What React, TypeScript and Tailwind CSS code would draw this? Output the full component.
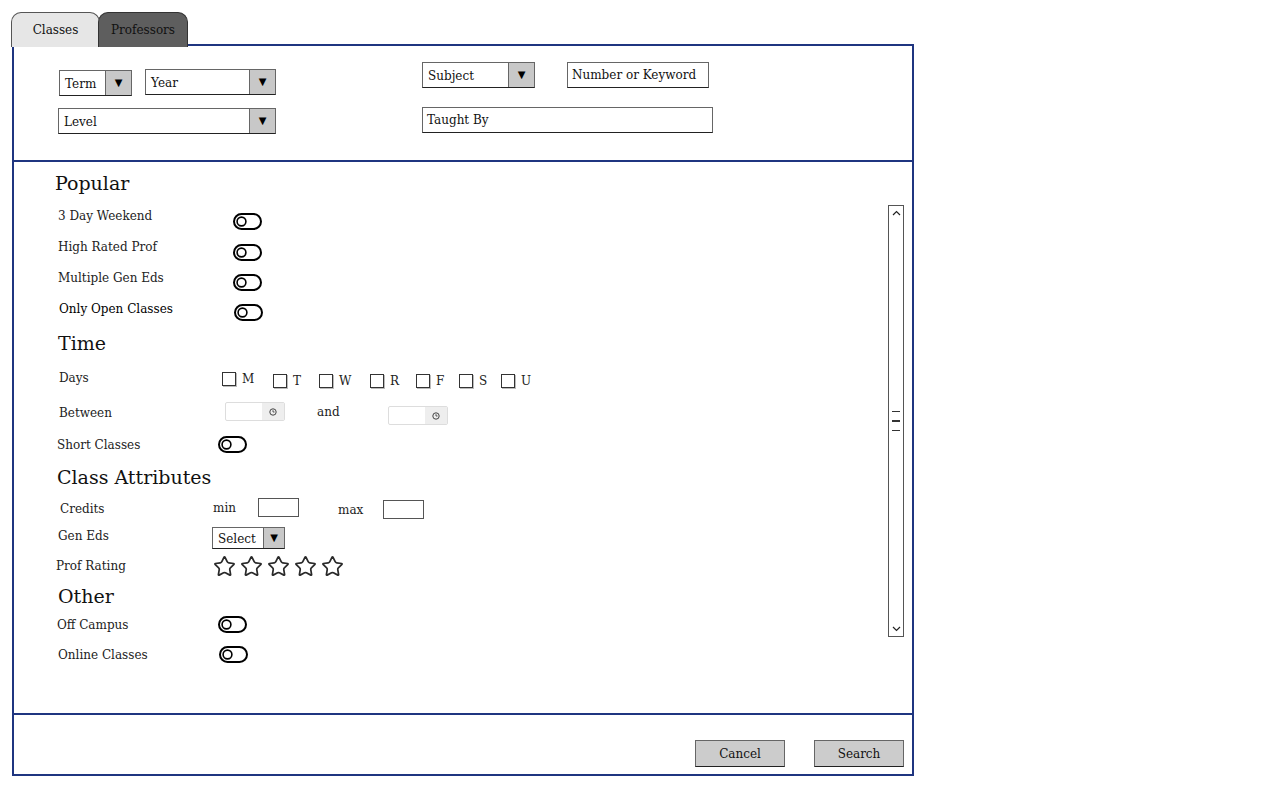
import { Star } from 'lucide-react';

const serif = "font-['DejaVu_Serif',serif]";

function Toggle() {
  return (
    <svg width="29" height="17" viewBox="0 0 29 17" className="block">
      <rect x="1" y="1" width="27" height="15" rx="7.5" fill="white" stroke="#000" strokeWidth="2" />
      <circle cx="8.5" cy="8.5" r="4.4" fill="white" stroke="#000" strokeWidth="1.6" />
    </svg>
  );
}

function Select({ label, w, h = 26, arrow = 26 }: { label: string; w: number; h?: number; arrow?: number }) {
  return (
    <div
      className="flex border border-[#666] border-b-[#222] bg-white text-[12px] leading-none text-[#111]"
      style={{ width: w, height: h }}
    >
      <div className="flex flex-1 items-center pl-[5px] pt-[1px]">{label}</div>
      <div
        className="flex items-center justify-center border-l border-[#666] bg-[#c8c8c8] text-[10px] text-black"
        style={{ width: arrow }}
      >
        ▼
      </div>
    </div>
  );
}

function TextBox({ label, w }: { label: string; w: number }) {
  return (
    <div
      className="flex h-[26px] items-center border border-[#666] border-b-[#222] bg-white pl-[4px] text-[12px] text-[#111]"
      style={{ width: w }}
    >
      {label}
    </div>
  );
}

function TimeInput() {
  return (
    <div className="flex h-[19px] w-[60px] overflow-hidden rounded-[2px] border border-[#ddd] bg-white">
      <div className="flex-1" />
      <div className="flex w-[22px] items-center justify-center bg-[#eeeeee]">
        <svg width="8" height="8" viewBox="0 0 8 8">
          <circle cx="4" cy="4" r="3.2" fill="none" stroke="#444" strokeWidth="1" />
          <path d="M4 2.2V4h1.5" fill="none" stroke="#444" strokeWidth="0.9" />
        </svg>
      </div>
    </div>
  );
}

function Heading({ text, ml, h }: { text: string; ml: number; h: number }) {
  return (
    <div className="shrink-0 text-[19px] leading-[24px] text-[#111]" style={{ marginLeft: ml, height: h }}>
      {text}
    </div>
  );
}

function Row({
  label,
  x,
  cx,
  h,
  labelTop = 1,
  dark,
  children,
}: {
  label: string;
  x: number;
  cx: number;
  h: number;
  labelTop?: number;
  dark?: boolean;
  children: React.ReactNode;
}) {
  return (
    <div className="flex shrink-0 items-start" style={{ height: h }}>
      <div
        className={`shrink-0 text-[12px] leading-[16px] ${dark ? 'text-black' : 'text-[#222]'}`}
        style={{ marginLeft: x - 14, width: cx - x, marginTop: labelTop }}
      >
        {label}
      </div>
      {children}
    </div>
  );
}

const popular = [
  { label: '3 Day Weekend', x: 58, cx: 233, top: 6 },
  { label: 'High Rated Prof', x: 58, cx: 233, top: 6 },
  { label: 'Multiple Gen Eds', x: 58, cx: 233, top: 5 },
  { label: 'Only Open Classes', x: 59, cx: 234, top: 4, dark: true },
];

const days = [
  { d: 'M', w: 51, top: 3 },
  { d: 'T', w: 46, top: 5 },
  { d: 'W', w: 51, top: 5 },
  { d: 'R', w: 46, top: 5 },
  { d: 'F', w: 43, top: 5 },
  { d: 'S', w: 42, top: 5 },
  { d: 'U', w: 40, top: 5 },
];

export default function App() {
  return (
    <div className={`min-h-[800px] w-[1280px] bg-white pl-[11px] pt-[12px] ${serif}`}>
      {/* tabs */}
      <div className="relative z-10 flex h-[35px]">
        <div className="flex w-[89px] items-center justify-center rounded-t-[10px] border border-b-0 border-[#555] bg-[#e6e6e6] text-[12px] text-[#111]">
          Classes
        </div>
        <div className="-ml-[2px] flex w-[90px] items-center justify-center rounded-t-[10px] border border-b-0 border-[#333] bg-[#5e5e5e] text-[12px] text-[#111]">
          Professors
        </div>
      </div>

      {/* panel */}
      <div className="-mt-[3px] ml-[1px] flex h-[732px] w-[902px] flex-col border-2 border-[#1f3580]">
        {/* filters */}
        <div className="flex h-[116px] shrink-0 border-b-2 border-[#1f3580]">
          <div className="ml-[44px] flex flex-col pt-[23px]">
            <div className="flex h-[27px] items-start">
              <div className="ml-[1px] mt-[1px]">
                <Select label="Term" w={73} />
              </div>
              <div className="ml-[13px]">
                <Select label="Year" w={131} />
              </div>
            </div>
            <div className="mt-[12px]">
              <Select label="Level" w={218} />
            </div>
          </div>
          <div className="ml-[146px] flex flex-col pt-[16px]">
            <div className="flex items-start">
              <Select label="Subject" w={113} />
              <div className="ml-[32px]">
                <TextBox label="Number or Keyword" w={142} />
              </div>
            </div>
            <div className="mt-[19px]">
              <TextBox label="Taught By" w={291} />
            </div>
          </div>
        </div>

        {/* options */}
        <div className="flex h-[553px] shrink-0 border-b-2 border-[#1f3580]">
          <div className="flex flex-1 flex-col pt-[9px]">
            <Heading text="Popular" ml={41} h={36} />
            {popular.map((p) => (
              <Row key={p.label} label={p.label} x={p.x} cx={p.cx} h={31} dark={p.dark}>
                <div style={{ marginTop: p.top }}>
                  <Toggle />
                </div>
              </Row>
            ))}

            <Heading text="Time" ml={44} h={38} />
            <Row label="Days" x={59} cx={222} h={33}>
              {days.map((d) => (
                <div key={d.d} className="flex shrink-0 items-center gap-[6px]" style={{ width: d.w, marginTop: d.top }}>
                  <div className="h-[14px] w-[14px] border border-[#333] bg-white shadow-[1px_1px_0_#bbb]" />
                  <span className="text-[12px] leading-[14px] text-[#222]">{d.d}</span>
                </div>
              ))}
            </Row>
            <Row label="Between" x={59} cx={225} h={34} labelTop={3}>
              <TimeInput />
              <div className="ml-[32px] mt-[2px] w-[71px] text-[12px] leading-[16px] text-[#222]">and</div>
              <div className="mt-[4px]">
                <TimeInput />
              </div>
            </Row>
            <Row label="Short Classes" x={57} cx={218} h={29}>
              <Toggle />
            </Row>

            <Heading text="Class Attributes" ml={43} h={33} />
            <Row label="Credits" x={60} cx={213} h={29} labelTop={3}>
              <div className="mt-[2px] w-[45px] text-[12px] leading-[16px] text-[#222]">min</div>
              <div className="h-[19px] w-[41px] border border-[#555] bg-white" />
              <div className="ml-[39px] mt-[4px] w-[45px] text-[12px] leading-[16px] text-[#222]">max</div>
              <div className="mt-[2px] h-[19px] w-[41px] border border-[#555] bg-white" />
            </Row>
            <Row label="Gen Eds" x={58} cx={212} h={30}>
              <Select label="Select" w={73} h={22} arrow={21} />
            </Row>
            <Row label="Prof Rating" x={56} cx={213} h={27}>
              <div className="-mt-[2px] flex gap-[4px]">
                {[0, 1, 2, 3, 4].map((i) => (
                  <Star key={i} size={23} strokeWidth={1.8} color="#2a2a2a" />
                ))}
              </div>
            </Row>

            <Heading text="Other" ml={44} h={32} />
            <Row label="Off Campus" x={57} cx={218} h={30}>
              <Toggle />
            </Row>
            <Row label="Online Classes" x={58} cx={219} h={30}>
              <Toggle />
            </Row>
          </div>

          {/* scrollbar */}
          <div className="mr-[8px] mt-[43px] flex h-[432px] w-[16px] shrink-0 flex-col items-center justify-between border border-[#555] bg-white py-[4px]">
            <svg width="9" height="6" viewBox="0 0 9 6">
              <path d="M1 5l3.5-3.5L8 5" fill="none" stroke="#222" strokeWidth="1.2" />
            </svg>
            <div className="flex flex-col gap-[8px]">
              <div className="h-[1.5px] w-[8px] bg-[#333]" />
              <div className="h-[1.5px] w-[8px] bg-[#333]" />
              <div className="h-[1.5px] w-[8px] bg-[#333]" />
            </div>
            <svg width="9" height="6" viewBox="0 0 9 6">
              <path d="M1 1l3.5 3.5L8 1" fill="none" stroke="#222" strokeWidth="1.2" />
            </svg>
          </div>
        </div>

        {/* actions */}
        <div className="flex flex-1 items-start justify-end gap-[29px] pr-[8px] pt-[25px]">
          <button className="flex h-[27px] w-[90px] items-center justify-center border border-[#666] border-b-[#222] bg-[#cccccc] text-[12px] text-[#111]">
            Cancel
          </button>
          <button className="flex h-[27px] w-[90px] items-center justify-center border border-[#666] border-b-[#222] bg-[#cccccc] text-[12px] text-[#111]">
            Search
          </button>
        </div>
      </div>
    </div>
  );
}
